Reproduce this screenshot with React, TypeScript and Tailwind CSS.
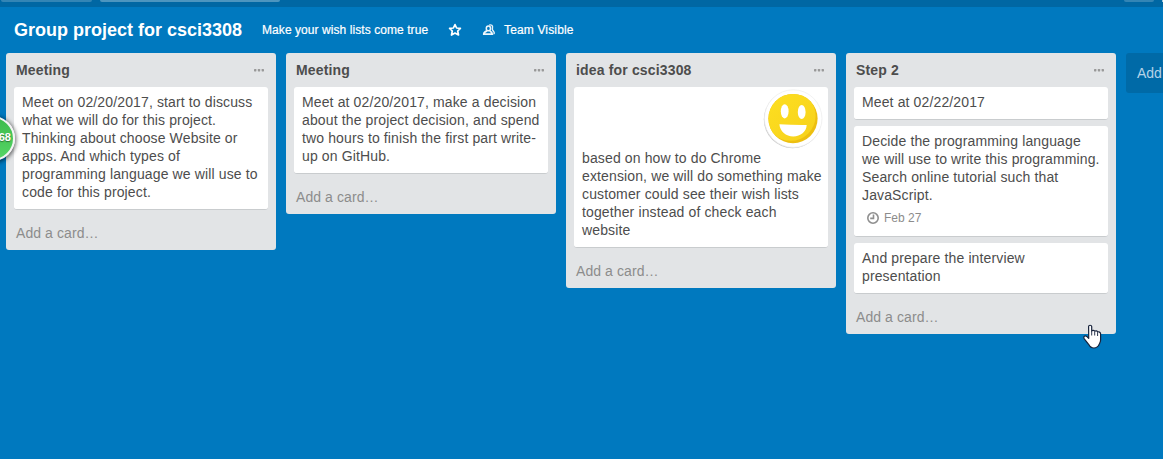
import type { ReactNode } from 'react';

function StarIcon() {
  return (
    <svg width="14" height="14" viewBox="0 0 14 14" fill="none" stroke="#fff" strokeWidth="1.7" strokeLinejoin="round">
      <path d="M7 1.6 L8.6 5 L12.4 5.4 L9.7 8 L10.5 12 L7 10.1 L3.5 12 L4.3 8 L1.6 5.4 L5.4 5 Z" />
    </svg>
  );
}

function MembersIcon() {
  return (
    <svg className="block" width="14" height="14" viewBox="0 0 14 14">
      <path
        d="M7.2 2.2 C9.2 1.2 11 2.6 10.5 4.8 C10.3 5.8 10.2 6.4 10.6 7 L12 9 C12.5 9.9 12.3 10.8 11.4 10.8"
        fill="none"
        stroke="#e6f1f8"
        strokeWidth="1.4"
      />
      <ellipse cx="6.4" cy="5.4" rx="2.1" ry="2.4" fill="none" stroke="#eef6fb" strokeWidth="1.5" />
      <path
        d="M4.9 7.9 C3 8.7 1.8 9.4 1.7 11.2 H10.3 C10.3 9.4 9.4 8.7 7.9 7.9"
        fill="none"
        stroke="#eef6fb"
        strokeWidth="1.7"
        strokeLinejoin="round"
      />
    </svg>
  );
}

function ClockIcon() {
  return (
    <svg width="14" height="14" viewBox="0 0 14 14" fill="none" stroke="#8f8f8f" strokeWidth="1.6">
      <circle cx="7" cy="7" r="5.2" />
      <path d="M7.5 3.5 V7.4 H4.2" />
    </svg>
  );
}

function Sticker() {
  return (
    <svg className="absolute left-[188px] top-[1px]" width="62" height="62" viewBox="0 0 62 62">
      <defs>
        <linearGradient id="face" x1="0" y1="0" x2="1" y2="1">
          <stop offset="0" stopColor="#fee021" />
          <stop offset="1" stopColor="#f6d11b" />
        </linearGradient>
        <clipPath id="faceClip">
          <circle cx="31" cy="30.6" r="24.6" />
        </clipPath>
      </defs>
      <circle cx="30.6" cy="31.4" r="28.8" fill="#c9c9c9" />
      <circle cx="31.2" cy="30.6" r="28.8" fill="#fff" stroke="#ececec" strokeWidth="0.7" />
      <circle cx="31" cy="30.6" r="24.6" fill="#edbf10" />
      <circle cx="28.6" cy="27.8" r="25" fill="url(#face)" clipPath="url(#faceClip)" />
      <ellipse cx="22.7" cy="23.3" rx="3.9" ry="7.1" fill="#fff" />
      <ellipse cx="39.7" cy="24" rx="3.9" ry="7.1" fill="#fff" />
      <path d="M17.4 36.2 Q31 37.2 44.7 37 C44.3 43.8 38.7 48.4 31.3 48.4 C24 48.4 17.8 43.2 17.4 36.2 Z" fill="#fff" />
    </svg>
  );
}

function HandCursor() {
  return (
    <svg className="absolute left-[1083px] top-[324px]" width="20" height="26" viewBox="0 0 20 26">
      <path
        d="M5.6 2.6 C5.6 .8 8.6 .8 8.7 2.6 V7 C9.5 6 11.4 6.2 11.7 7.2 C12.6 6.5 14.3 6.8 14.6 7.9 C15.7 7.5 17.6 8.2 17.6 9.8 V16 C17.6 18 16.8 19 16.2 20.2 C15.6 22 13.2 24 10.9 24 C8.4 24 6.8 22.7 6 20.8 L1.3 14.8 C-.1 12.6 2 11.2 3.7 12.4 L5.7 14.4 Z"
        fill="#fff"
        stroke="#18233c"
        strokeWidth="1.2"
        strokeLinejoin="round"
      />
      <path d="M8.7 7 V11.5 M11.7 7.5 V11.5 M14.6 8.2 V12" stroke="#18233c" strokeWidth="0.9" />
    </svg>
  );
}

function Card({ children }: { children: ReactNode }) {
  return (
    <div className="relative mb-1.5 rounded-[3px] border-b border-[#c9ccce] bg-white px-2 pt-1.5 pb-2 text-[14px] leading-[18px] tracking-[0.13px] whitespace-nowrap text-[#4d4d4d]">
      {children}
    </div>
  );
}

function Lines({ lines }: { lines: string[] }) {
  return (
    <>
      {lines.map((line) => (
        <p key={line}>{line}</p>
      ))}
    </>
  );
}

function List({ title, children }: { title: string; children: ReactNode }) {
  return (
    <section className="w-[270px] shrink-0 rounded-[3px] bg-[#e2e4e6]">
      <header className="flex h-[34px] items-center justify-between pr-[12px] pl-[10px]">
        <h2 className="text-[14px] leading-[18px] font-bold tracking-[0.16px] text-[#4d4d4d]">{title}</h2>
        <svg width="10" height="3" viewBox="0 0 10 3" fill="#999">
          <rect width="2.4" height="2.4" rx="0.6" />
          <rect x="3.8" width="2.4" height="2.4" rx="0.6" />
          <rect x="7.6" width="2.4" height="2.4" rx="0.6" />
        </svg>
      </header>
      <div className="px-2">{children}</div>
      <footer className="h-[34px] px-[10px] pt-2 text-[14px] leading-[18px] tracking-[0.08px] text-[#8c8c8c]">
        Add a card…
      </footer>
    </section>
  );
}

export default function App() {
  return (
    <div className="relative h-[459px] w-[1163px] overflow-hidden bg-[#0079bf] font-['Liberation_Sans',Arial,sans-serif]">
      <div className="flex h-[7px] items-start bg-[#0067a3]">
        <div className="ml-[1px] h-[2px] w-[91px] shrink-0 rounded-b-[3px] bg-[#3385b5]" />
        <div className="ml-2 h-[2px] w-[180px] shrink-0 rounded-b-[3px] bg-[#4c95bf]" />
        <div className="ml-[844px] h-[2px] w-[30px] shrink-0 rounded-b-[3px] bg-[#3385b5]" />
        <div className="ml-2 h-[2px] w-[10px] shrink-0 bg-[#a6cade]" />
      </div>
      <div className="flex h-[46px] items-center pl-[14px] text-[12px] whitespace-nowrap text-white">
        <h1 className="w-[248px] text-[18px] leading-6 font-bold">Group project for csci3308</h1>
        <span className="w-[186px] tracking-[0.07px] [-webkit-text-stroke:0.2px_white]">Make your wish lists come true</span>
        <StarIcon />
        <span className="ml-5">
          <MembersIcon />
        </span>
        <span className="ml-2 tracking-[0.15px] [-webkit-text-stroke:0.2px_white]">Team Visible</span>
      </div>
      <main className="flex items-start gap-[10px] pl-1.5">
        <List title="Meeting">
          <Card>
            <Lines
              lines={[
                'Meet on 02/20/2017, start to discuss',
                'what we will do for this project.',
                'Thinking about choose Website or',
                'apps. And which types of',
                'programming language we will use to',
                'code for this project.',
              ]}
            />
          </Card>
        </List>
        <List title="Meeting">
          <Card>
            <Lines
              lines={[
                'Meet at 02/20/2017, make a decision',
                'about the project decision, and spend',
                'two hours to finish the first part write-',
                'up on GitHub.',
              ]}
            />
          </Card>
        </List>
        <List title="idea for csci3308">
          <Card>
            <Sticker />
            <div className="pt-14">
              <Lines
                lines={[
                  'based on how to do Chrome',
                  'extension, we will do something make',
                  'customer could see their wish lists',
                  'together instead of check each',
                  'website',
                ]}
              />
            </div>
          </Card>
        </List>
        <List title="Step 2">
          <Card>
            <Lines lines={['Meet at 02/22/2017']} />
          </Card>
          <Card>
            <Lines
              lines={[
                'Decide the programming language',
                'we will use to write this programming.',
                'Search online tutorial such that',
                'JavaScript.',
              ]}
            />
            <div className="flex h-6 items-center gap-1 pt-1 pl-1 text-[12px] tracking-normal text-[#8c8c8c]">
              <ClockIcon />
              <span>Feb 27</span>
            </div>
          </Card>
          <Card>
            <Lines lines={['And prepare the interview', 'presentation']} />
          </Card>
        </List>
        <div className="h-10 w-[37px] shrink-0 rounded-l-[3px] bg-[#006aa7] pt-[11px] pl-[11px] text-[14px] leading-[18px] whitespace-nowrap text-[#b5d3e7]">
          Add
        </div>
      </main>
      <div className="absolute top-[116px] -left-[30px] flex h-[45px] w-[45px] items-center justify-end rounded-full border-2 border-[#f4f4f4] bg-linear-to-b from-[#3dbb4c] to-[#55d565] pr-[2px] text-[11px] font-bold text-white shadow-[0_1px_4px_1px_rgba(0,0,0,0.6)]">
        <span className="pb-0.5 [text-shadow:0_1px_1px_rgba(0,0,0,0.4)]">68</span>
      </div>
      <HandCursor />
    </div>
  );
}
